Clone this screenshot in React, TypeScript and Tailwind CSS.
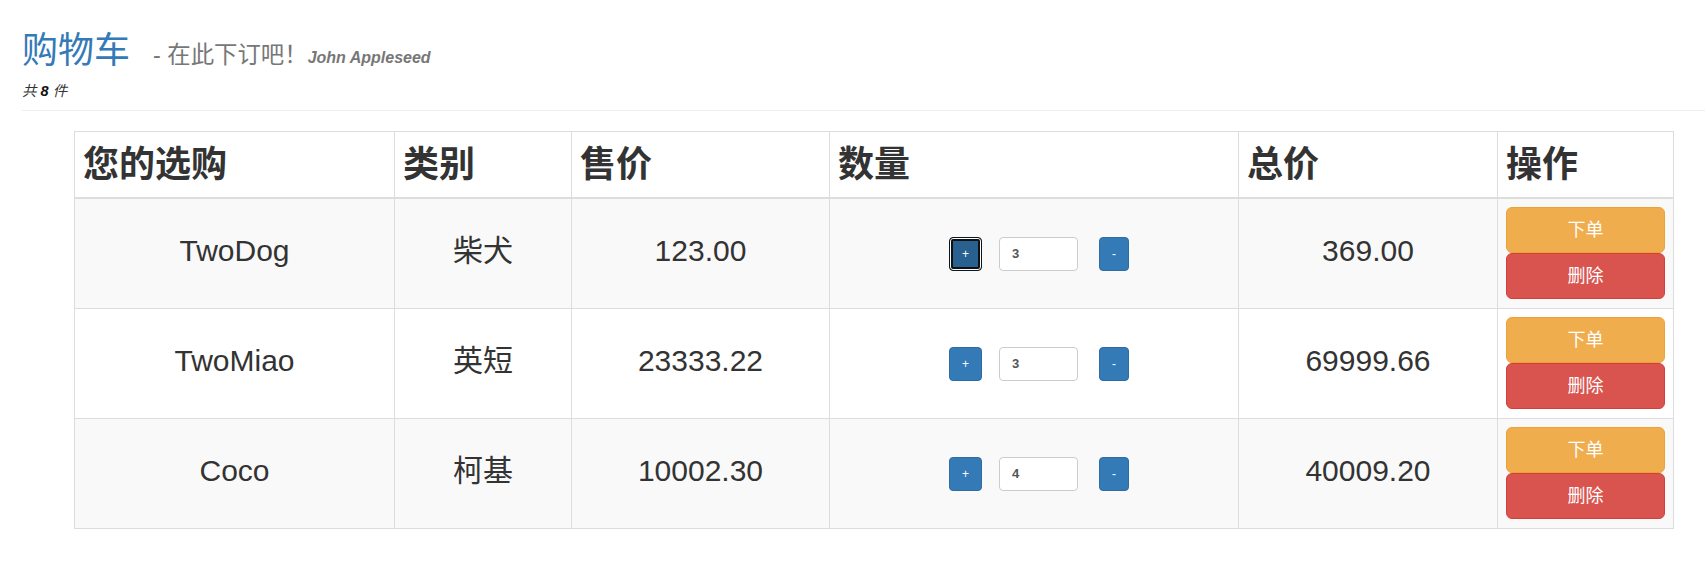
import { useState } from "react";

interface CartItem {
    name: string;
    kind: string;
    price: number;
    count: number;
}

const initialItems: CartItem[] = [
    { name: "TwoDog", kind: "柴犬", price: 123, count: 3 },
    { name: "TwoMiao", kind: "英短", price: 23333.22, count: 3 },
    { name: "Coco", kind: "柯基", price: 10002.3, count: 4 },
];

const font = "font-['Liberation_Sans','Noto_Sans_CJK_SC',sans-serif]";

function CellText({ children }: { children: React.ReactNode }) {
    return (
        <div className="mt-[12px] mb-[18px] text-[30px] leading-[33px]">{children}</div>
    );
}

function QuantityControl({
    count,
    focused,
    onAdd,
    onSub,
}: {
    count: number;
    focused: boolean;
    onAdd: () => void;
    onSub: () => void;
}) {
    return (
        <div className="flex items-center justify-center pl-[10px]">
            {focused ? (
                <button
                    onClick={onAdd}
                    className="h-[34px] w-[33px] rounded-[4px] border border-[#0c1620] bg-[#286090] text-[12px] text-white shadow-[inset_0_0_0_1px_#fff,inset_0_0_0_3px_#111]"
                >
                    +
                </button>
            ) : (
                <button
                    onClick={onAdd}
                    className="h-[34px] w-[33px] rounded-[4px] border border-[#2e6da4] bg-[#337ab7] text-[12px] text-white"
                >
                    +
                </button>
            )}
            <input
                readOnly
                value={count}
                className="ml-[17px] h-[34px] w-[79px] rounded-[4px] border border-[#ccc] bg-white px-3 text-[13px] font-semibold text-[#555] outline-none"
            />
            <button
                onClick={onSub}
                className="ml-[21px] h-[34px] w-[30px] rounded-[4px] border border-[#2e6da4] bg-[#337ab7] text-[12px] text-white"
            >
                -
            </button>
        </div>
    );
}

export default function App() {
    const [items, setItems] = useState(initialItems);
    const total = items.reduce((sum, item) => sum + item.count, 0) - 2;

    const change = (index: number, delta: number) => {
        setItems((prev) =>
            prev.map((item, i) =>
                i === index
                    ? { ...item, count: Math.max(1, item.count + delta) }
                    : item
            )
        );
    };

    return (
        <div className={`${font} min-h-[562px] bg-white text-[#333]`}>
            <div className="ml-[22px] border-b border-[#eee] pt-[31px] pb-[9px]">
                <h1 className="text-[36px] leading-[40px] font-normal text-[#337ab7]">
                    购物车
                    <span className="ml-[23px] text-[23.4px] leading-none text-[#777]">
                        - 在此下订吧！
                        <span className="text-[16px] font-bold italic leading-none">
                            John Appleseed
                        </span>
                    </span>
                </h1>
                <p className="mt-[10px] text-[14.5px] leading-5 italic">
                    共 <b className="text-[#111]">{total}</b> 件
                </p>
            </div>

            <div className="pt-5 pr-[31px] pl-[74px]">
                <table className="w-full table-fixed border-collapse border border-[#ddd]">
                    <colgroup>
                        <col className="w-[320px]" />
                        <col className="w-[177px]" />
                        <col className="w-[258px]" />
                        <col className="w-[409px]" />
                        <col className="w-[259px]" />
                        <col className="w-[176px]" />
                    </colgroup>
                    <thead>
                        <tr className="border-b-2 border-[#ddd]">
                            {["您的选购", "类别", "售价", "数量", "总价", "操作"].map(
                                (title) => (
                                    <th
                                        key={title}
                                        className="border border-[#ddd] border-b-2 p-2 text-left align-middle text-[36px] leading-[49px] font-bold"
                                    >
                                        {title}
                                    </th>
                                )
                            )}
                        </tr>
                    </thead>
                    <tbody>
                        {items.map((item, index) => (
                            <tr
                                key={item.name}
                                className={index % 2 === 0 ? "bg-[#f9f9f9]" : "bg-white"}
                            >
                                <td className="border border-[#ddd] p-2 text-center align-middle">
                                    <CellText>{item.name}</CellText>
                                </td>
                                <td className="border border-[#ddd] p-2 text-center align-middle">
                                    <CellText>{item.kind}</CellText>
                                </td>
                                <td className="border border-[#ddd] p-2 text-center align-middle">
                                    <CellText>{item.price.toFixed(2)}</CellText>
                                </td>
                                <td className="border border-[#ddd] p-2 align-middle">
                                    <QuantityControl
                                        count={item.count}
                                        focused={index === 0}
                                        onAdd={() => change(index, 1)}
                                        onSub={() => change(index, -1)}
                                    />
                                </td>
                                <td className="border border-[#ddd] p-2 text-center align-middle">
                                    <CellText>{(item.price * item.count).toFixed(2)}</CellText>
                                </td>
                                <td className="border border-[#ddd] pt-2 pr-2 pb-[9px] pl-2 align-middle">
                                    <button className="block h-[46px] w-full rounded-[6px] border border-[#eea236] bg-[#f0ad4e] text-[18px] text-white">
                                        下单
                                    </button>
                                    <button className="block h-[46px] w-full rounded-[6px] border border-[#d43f3a] bg-[#d9534f] text-[18px] text-white">
                                        删除
                                    </button>
                                </td>
                            </tr>
                        ))}
                    </tbody>
                </table>
            </div>
        </div>
    );
}
